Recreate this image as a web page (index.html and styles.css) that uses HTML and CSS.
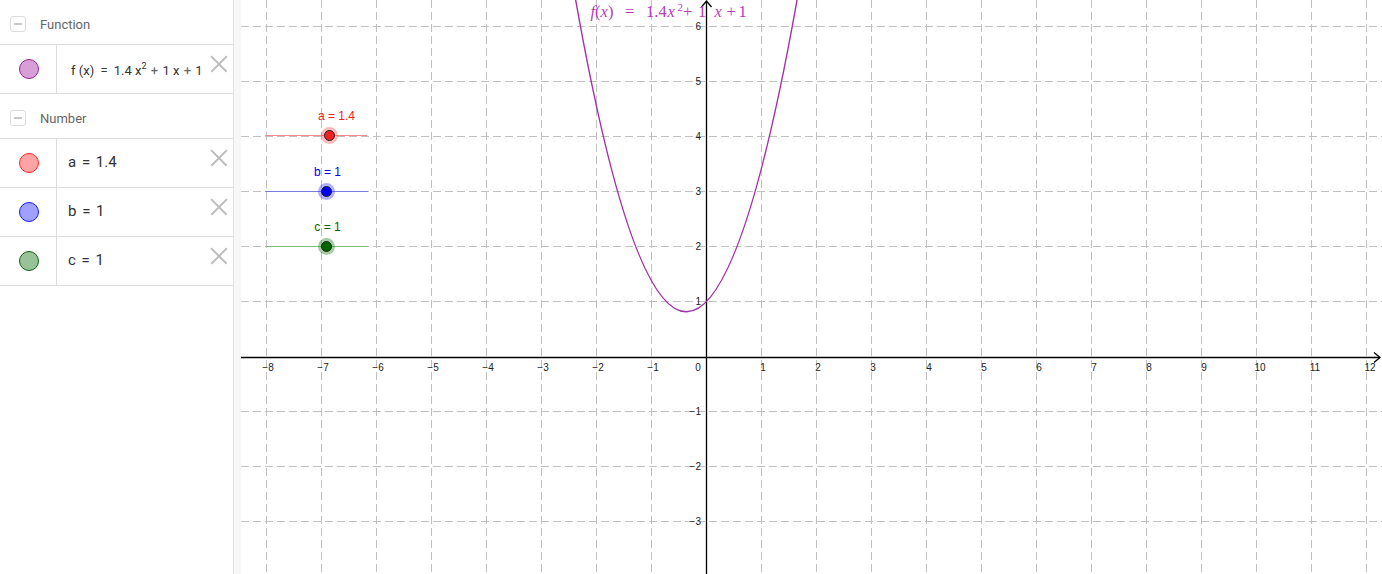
FILE: index.html
```html
<!DOCTYPE html>
<html>
<head>
<meta charset="utf-8">
<link rel="stylesheet" href="styles.css">
</head>
<body>
<div class="app">
  <aside class="panel">
    <div class="group-head"><span class="toggle"></span><span class="group-title">Function</span></div>
    <div class="item">
      <div class="marker"><span class="dot dot-f"></span></div>
      <div class="expr expr-small">f (x) <span class="op">=</span> 1.4 x<sup>2</sup> <span class="pl">+</span> 1 x <span class="pl">+</span> 1</div>
      <span class="close"></span>
    </div>
    <div class="group-head"><span class="toggle"></span><span class="group-title">Number</span></div>
    <div class="item">
      <div class="marker"><span class="dot dot-a"></span></div>
      <div class="expr">a <span class="op">=</span> 1.4</div>
      <span class="close"></span>
    </div>
    <div class="item">
      <div class="marker"><span class="dot dot-b"></span></div>
      <div class="expr">b <span class="op">=</span> 1</div>
      <span class="close"></span>
    </div>
    <div class="item">
      <div class="marker"><span class="dot dot-c"></span></div>
      <div class="expr">c <span class="op">=</span> 1</div>
      <span class="close"></span>
    </div>
  </aside>
  <div class="divider"></div>
  <main class="graph">
    <svg class="canvas" width="1141" height="574" viewBox="0 0 1141 574">
      <g class="grid">
        <path d="M25.5 0V574M80.5 0V574M135.5 0V574M190.5 0V574M245.5 0V574M300.5 0V574M355.5 0V574M410.5 0V574M520.5 0V574M575.5 0V574M630.5 0V574M685.5 0V574M740.5 0V574M795.5 0V574M850.5 0V574M905.5 0V574M960.5 0V574M1015.5 0V574M1070.5 0V574M1125.5 0V574"/>
        <path d="M0 26.5H1141M0 81.5H1141M0 136.5H1141M0 191.5H1141M0 246.5H1141M0 301.5H1141M0 411.5H1141M0 466.5H1141M0 521.5H1141"/>
      </g>
      <g class="axes">
        <path d="M0 357.5H1139M465.5 2V574"/>
        <path d="M1133 352.5L1139 357.5L1133 362.5M460.5 7L465.5 1L470.5 7" fill="none"/>
      </g>
      <g class="xlabels">
        <text x="27" y="371">−8</text><text x="82" y="371">−7</text><text x="137" y="371">−6</text><text x="192" y="371">−5</text><text x="247" y="371">−4</text><text x="302" y="371">−3</text><text x="357" y="371">−2</text><text x="412" y="371">−1</text>
        <text x="457" y="371">0</text>
        <text x="522" y="371">1</text><text x="577" y="371">2</text><text x="632" y="371">3</text><text x="688" y="371">4</text><text x="743" y="371">5</text><text x="798" y="371">6</text><text x="853" y="371">7</text><text x="908" y="371">8</text><text x="963" y="371">9</text><text x="1019" y="371">10</text><text x="1074" y="371">11</text><text x="1129" y="371">12</text>
      </g>
      <g class="ylabels">
        <text x="460" y="30">6</text><text x="460" y="85">5</text><text x="460" y="140">4</text><text x="460" y="195">3</text><text x="460" y="250">2</text><text x="460" y="305">1</text>
        <text x="460" y="415">−1</text><text x="460" y="470">−2</text><text x="460" y="525">−3</text>
      </g>
      <path class="curve" d="M327.5 -41.75Q445.75 667.75 564 -46.48"/>
      <text class="flabel" y="17"><tspan class="it" x="349.5">f</tspan>(<tspan class="it">x</tspan>)<tspan x="384">=</tspan><tspan x="405">1.4</tspan><tspan class="it" x="426.5">x</tspan><tspan class="sup" x="436.5" y="11">2</tspan><tspan x="442" y="17">+</tspan><tspan x="457">1</tspan><tspan class="it" x="473.5">x</tspan><tspan x="485.5">+</tspan><tspan x="497.5">1</tspan></text>
      <g class="slider slider-a">
        <line x1="24" y1="135.5" x2="126" y2="135.5"/>
        <circle class="halo" cx="88.5" cy="135.5" r="8.5"/>
        <circle class="pt" cx="88.5" cy="135.5" r="5"/>
        <text x="95.5" y="120">a = 1.4</text>
      </g>
      <g class="slider slider-b">
        <line x1="24" y1="191.5" x2="127" y2="191.5"/>
        <circle class="halo" cx="85.5" cy="191.5" r="8.5"/>
        <circle class="pt" cx="85.5" cy="191.5" r="5"/>
        <text x="86.5" y="175.5">b = 1</text>
      </g>
      <g class="slider slider-c">
        <line x1="24" y1="246.5" x2="127" y2="246.5"/>
        <circle class="halo" cx="85.5" cy="246.5" r="8.5"/>
        <circle class="pt" cx="85.5" cy="246.5" r="5"/>
        <text x="86.5" y="230.5">c = 1</text>
      </g>
    </svg>
  </main>
</div>
</body>
</html>
```

FILE: styles.css
```css
* { box-sizing: border-box; }
html, body { margin: 0; padding: 0; background: #fff; }
body { width: 1382px; height: 574px; overflow: hidden; font-family: Roboto, "Liberation Sans", sans-serif; }
.app { display: flex; height: 574px; }
.panel { width: 233px; flex: none; display: flex; flex-direction: column; background: #fff; }
.group-head { height: 45px; border-bottom: 1px solid #ddd; display: flex; align-items: center; padding: 4px 0 0 10px; }
.toggle { width: 16px; height: 16px; border: 1px solid #dcdcdc; border-radius: 3px; display: flex; align-items: center; justify-content: center; }
.toggle::before { content: ""; width: 8px; height: 2px; background: #c8c8c8; }
.group-title { margin-left: 14px; font-size: 13px; color: #666; margin-top: 1px; }
.item { height: 49px; border-bottom: 1px solid #ddd; display: flex; align-items: center; position: relative; }
.marker { width: 57px; height: 100%; border-right: 1px solid #ddd; display: flex; align-items: center; justify-content: center; padding-left: 1px; }
.dot { width: 20px; height: 20px; border-radius: 50%; border: 1px solid; display: block; }
.dot-f { background: #d69fd6; border-color: #991f99; }
.dot-a { background: #ffa3a3; border-color: #ff2a2a; }
.dot-b { background: #a0a0ff; border-color: #1a1aff; }
.dot-c { background: #99c299; border-color: #0f640f; }
.expr { margin-left: 11px; font-size: 15px; color: #333; margin-top: -2px; }
.expr-small { margin-left: 14px; font-size: 13px; margin-top: 2px; }
.expr sup { font-size: 9px; vertical-align: 6px; line-height: 0; }
.op { margin: 0 2px; }
.expr-small .op { margin: 0 3px; }
.pl { color: #666; margin: 0 1px; }
.close { position: absolute; right: 5px; top: 10px; width: 18px; height: 18px; }
.close::before, .close::after { content: ""; position: absolute; left: -2px; top: 8px; width: 22px; height: 1.6px; background: #bdbdbd; transform: rotate(45deg); }
.close::after { transform: rotate(-45deg); }
.divider { width: 8px; flex: none; background: #f7f7f7; border-left: 1px solid #e0e0e0; }
.graph { flex: 1; position: relative; overflow: hidden; }
.canvas { display: block; }
.grid path { stroke: #c0c0c0; stroke-width: 1; stroke-dasharray: 8 4; fill: none; }
.axes path { stroke: #000; stroke-width: 1.3; }
.xlabels text { font-family: "Liberation Sans", sans-serif; font-size: 10px; fill: #222; text-anchor: middle; }
.ylabels text { font-family: "Liberation Sans", sans-serif; font-size: 10px; fill: #222; text-anchor: end; }
.curve { fill: none; stroke: #a230a8; stroke-width: 1.4; }
.flabel { font-family: "Liberation Serif", "DejaVu Serif", serif; font-size: 16.5px; fill: #b43cb9; }
.flabel .it { font-style: italic; }
.flabel .sup { font-size: 11px; }
.slider text { font-family: "Liberation Sans", sans-serif; font-size: 12px; text-anchor: middle; }
.slider line { stroke-width: 1; }
.pt { stroke: #222; stroke-width: 1; }
.slider-a line { stroke: #f58a8a; }
.slider-a .halo { fill: rgba(255, 60, 60, 0.35); }
.slider-a .pt { fill: #ee2222; }
.slider-a text { fill: #ee2222; }
.slider-b line { stroke: #7a7ae0; }
.slider-b .halo { fill: rgba(60, 60, 255, 0.4); }
.slider-b .pt { fill: #0000ee; }
.slider-b text { fill: #0000ee; }
.slider-c line { stroke: #7cbf7c; }
.slider-c .halo { fill: rgba(0, 110, 0, 0.35); }
.slider-c .pt { fill: #006400; }
.slider-c text { fill: #006400; }
```
